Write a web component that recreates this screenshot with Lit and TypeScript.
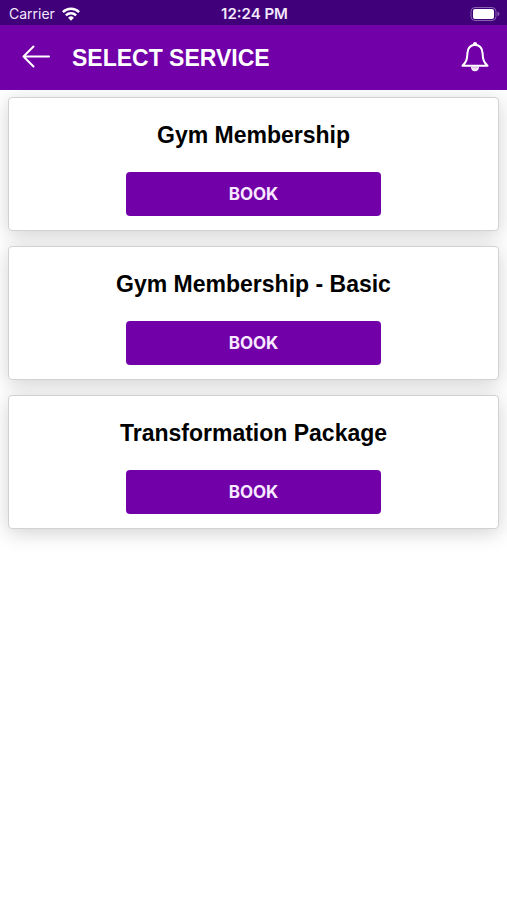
import { LitElement, html, css } from "lit";
import { customElement, property, state } from "lit/decorators.js";

@customElement("status-bar")
class StatusBar extends LitElement {
  static styles = css`
    :host {
      display: grid;
      grid-template-columns: 1fr auto 1fr;
      align-items: center;
      height: 25px;
      padding: 0 7px 0 9px;
      background: #3f007a;
      color: #f3e8fb;
      font: 14px/16px Inter, sans-serif;
    }
    .carrier {
      display: flex;
      align-items: center;
      gap: 7px;
      padding-top: 2px;
    }
    .time {
      font-size: 15px;
      font-weight: 600;
      padding-top: 2px;
    }
    .battery {
      justify-self: end;
      padding-top: 2px;
    }
    svg {
      display: block;
    }
  `;

  render() {
    return html`
      <div class="carrier">
        <span>Carrier</span>
        <svg width="18" height="14" viewBox="0 0 18 14" fill="none" stroke="#fff" stroke-width="2.5">
          <path d="M0.9 5.2a11.5 11.5 0 0 1 16.2 0" />
          <path d="M3.9 8.3a7.3 7.3 0 0 1 10.2 0" />
          <path d="M9 13.7L6.1 10.8a4.1 4.1 0 0 1 5.8 0z" fill="#fff" stroke="none" />
        </svg>
      </div>
      <div class="time">12:24 PM</div>
      <div class="battery">
        <svg width="30" height="14" viewBox="0 0 30 14">
          <rect x="1" y="0.5" width="25" height="13" rx="4" fill="none" stroke="#8a64b0" />
          <rect x="3" y="2" width="21" height="10" rx="2" fill="#fff" />
          <path d="M27.5 4.8q2 .6 2 2.2t-2 2.2z" fill="#8a64b0" />
        </svg>
      </div>
    `;
  }
}

@customElement("service-card")
class ServiceCard extends LitElement {
  @property() name = "";

  static styles = css`
    :host {
      display: flex;
      flex-direction: column;
      align-items: center;
      gap: 21px;
      padding: 21px 16px 14px;
      background: #fff;
      border: 1px solid #d2d2d2;
      border-radius: 4px;
      box-shadow: 0 4px 20px rgba(0, 0, 0, 0.18);
    }
    h2 {
      margin: 0;
      color: #000;
      font: bold 23px/32px "Liberation Sans", Arial, sans-serif;
      text-align: center;
    }
    button {
      width: 56%;
      height: 44px;
      padding: 0;
      border: 0;
      border-radius: 4px;
      background: #7200a8;
      color: #f7e9ff;
      font: 700 17px/20px Inter, sans-serif;
      cursor: pointer;
    }
  `;

  render() {
    return html`
      <h2 id="name">${this.name}</h2>
      <button type="button" aria-describedby="name">BOOK</button>
    `;
  }
}

@customElement("app-root")
class AppRoot extends LitElement {
  @state() private services = ["Gym Membership", "Gym Membership - Basic", "Transformation Package"];

  static styles = css`
    :host {
      display: block;
      min-height: 100vh;
      background: #fff;
    }
    header {
      display: flex;
      align-items: center;
      height: 65px;
      box-sizing: border-box;
      padding: 0 16px 0 20px;
      background: #7200a8;
      color: #fff;
      position: relative;
    }
    h1 {
      flex: 1;
      margin: 0 0 0 20px;
      font: bold 23px/32px "Liberation Sans", Arial, sans-serif;
    }
    .icon {
      display: block;
      padding: 0;
      border: 0;
      background: none;
      color: inherit;
      cursor: pointer;
    }
    svg {
      display: block;
    }
    main {
      display: flex;
      flex-direction: column;
      gap: 15px;
      padding: 7px 8px 24px;
    }
  `;

  render() {
    return html`
      <status-bar></status-bar>
      <header>
        <button class="icon" type="button" aria-label="Back">
          <svg width="32" height="28" viewBox="0 0 32 28" fill="none" stroke="currentColor" stroke-width="2" stroke-linecap="round" stroke-linejoin="round">
            <path d="M13.5 2.5L3.5 12.5L13.5 22.5M3.5 12.5H29" />
          </svg>
        </button>
        <h1>SELECT SERVICE</h1>
        <button class="icon" type="button" aria-label="Notifications">
          <svg width="32" height="32" viewBox="0 0 32 32" fill="none" stroke="currentColor" stroke-width="2" stroke-linecap="round" stroke-linejoin="round">
            <path d="M16 2.8C11 3.2 8.6 6.8 8.4 11.4C8.2 17.4 7.4 19.8 3.5 23.8H28.5C24.6 19.8 23.8 17.4 23.6 11.4C23.4 6.8 21 3.2 16 2.8Z" />
            <path d="M14.8 2.2a1.2 1.2 0 0 1 2.4 0" />
            <path d="M12.5 25.4a3.5 3.5 0 0 0 7 0z" fill="#f0dcfa" stroke-width="1" />
          </svg>
        </button>
      </header>
      <main>
        ${this.services.map((name) => html`<service-card .name=${name}></service-card>`)}
      </main>
    `;
  }
}
